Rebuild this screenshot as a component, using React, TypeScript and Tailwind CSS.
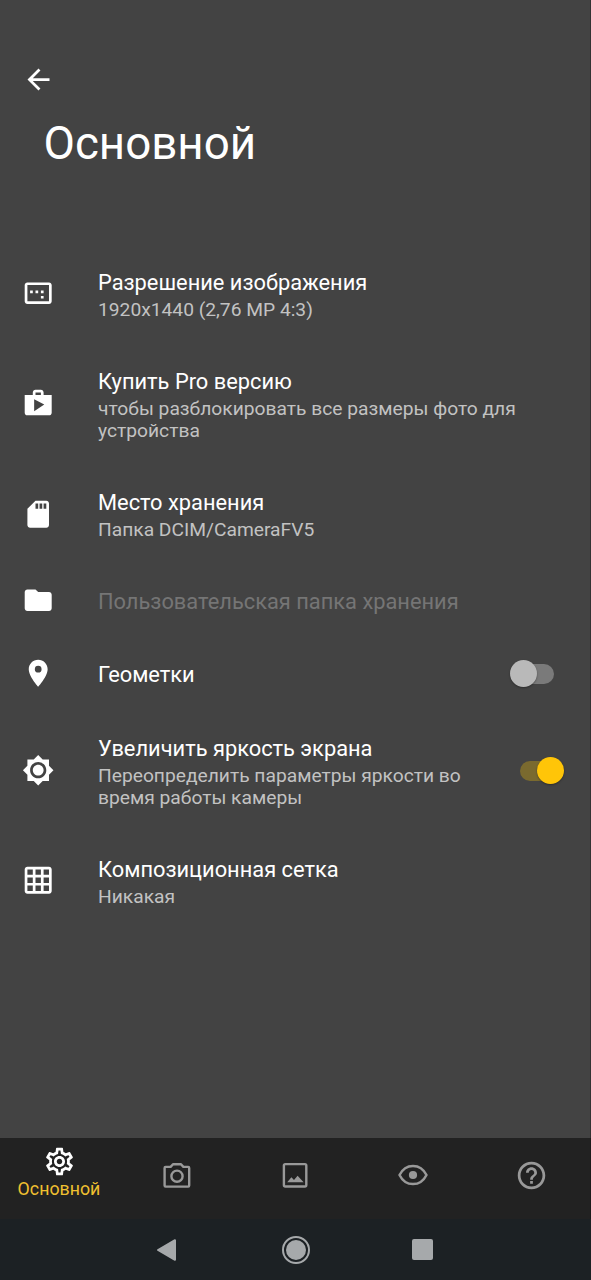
import React from "react";
import {
  MdArrowBack,
  MdImageAspectRatio,
  MdShop,
  MdSdStorage,
  MdFolder,
  MdPlace,
  MdBrightness7,
  MdGridOn,
  MdOutlineSettings,
  MdHelpOutline,
} from "react-icons/md";

type RowProps = {
  icon: React.ReactNode;
  title: string;
  titleClass?: string;
  lines?: string[];
  className: string;
  children?: React.ReactNode;
};

function Row({ icon, title, titleClass = "text-white", lines = [], className, children }: RowProps) {
  return (
    <div className={`flex items-center pl-[22px] ${className}`}>
      <div className="mb-[3px] w-[76px] shrink-0 text-[32.4px] text-white">{icon}</div>
      <div className="flex grow flex-col whitespace-nowrap">
        <div className={`text-[21.84px] leading-[26px] ${titleClass}`}>{title}</div>
        {lines.length > 0 && (
          <div className="-mb-px pt-[3px] text-[19.23px] leading-[22.3px] text-[#c2c2c2]">
            {lines.map((l) => (
              <div key={l}>{l}</div>
            ))}
          </div>
        )}
      </div>
      {children}
    </div>
  );
}

function CameraIcon() {
  return (
    <svg viewBox="0 0 28 28" className="size-[28px]" fill="none" stroke="currentColor" strokeWidth="2.4">
      <path d="M2.600 5.900H7.600L10 3.200H18L20.400 5.900H25.200Q26.200 5.900 26.200 6.900V24.600Q26.200 25.600 25.200 25.600H2.600Q1.600 25.600 1.600 24.600V6.900Q1.600 5.900 2.600 5.900z" strokeLinejoin="round" />
      <circle cx="14" cy="15.200" r="5.600" />
    </svg>
  );
}

function PhotoIcon() {
  return (
    <svg viewBox="0 0 28 28" className="size-[28px]" fill="none">
      <rect x="2.9" y="3.1" width="22.4" height="22.4" rx="1.4" stroke="currentColor" strokeWidth="2.4" />
      <path d="M6.200 21.300 10.400 16.300 13 18.900 16.600 14.700 22.600 21.300z" fill="currentColor" />
    </svg>
  );
}

function EyeIcon() {
  return (
    <svg viewBox="0 0 32 24" className="h-6 w-8" fill="none">
      <path d="M2.500 12C5.500 6 10.200 2.900 16 2.900s10.500 3.100 13.500 9.100C26.500 18 21.800 21.100 16 21.100S5.500 18 2.500 12z" stroke="currentColor" strokeWidth="2.500" strokeLinejoin="round" />
      <circle cx="16" cy="12" r="4.100" fill="currentColor" />
    </svg>
  );
}

export default function App() {
  return (
    <div className="flex h-[1280px] w-[591px] flex-col overflow-hidden bg-[#434343] font-['Roboto','Noto_Sans',sans-serif]">
      <div className="flex grow flex-col border-r border-[#333333]">
        <header className="h-[246px] shrink-0 pt-[63px]">
          <button className="ml-[21.5px] block text-[33px] text-white">
            <MdArrowBack />
          </button>
          <h1 className="ml-[43.5px] mt-[21px] text-[45.7px] leading-[54px] whitespace-nowrap text-white">Основной</h1>
        </header>
        <main className="flex flex-col">
          <Row className="h-[98px]" icon={<MdImageAspectRatio />} title="Разрешение изображения" lines={["1920x1440 (2,76 MP 4:3)"]} />
          <Row
            className="h-[122px]"
            icon={<MdShop />}
            title="Купить Pro версию"
            lines={["чтобы разблокировать все размеры фото для", "устройства"]}
          />
          <Row className="h-[99px]" icon={<MdSdStorage />} title="Место хранения" lines={["Папка DCIM/CameraFV5"]} />
          <Row className="h-[73px]" icon={<MdFolder />} title="Пользовательская папка хранения" titleClass="text-[#757575]" />
          <Row className="h-[73px]" icon={<MdPlace />} title="Геометки">
            <div className="mr-[36px] mb-[2px] flex h-5 w-[41px] items-center rounded-full bg-[#7a7a7a]">
              <div className="-ml-[3px] size-[27px] shrink-0 rounded-full bg-[#b9b9b9] shadow-[0_1px_2px_rgba(0,0,0,0.35)]" />
            </div>
          </Row>
          <Row
            className="h-[122px]"
            icon={<MdBrightness7 />}
            title="Увеличить яркость экрана"
            lines={["Переопределить параметры яркости во", "время работы камеры"]}
          >
            <div className="mr-[29px] mb-[3px] flex h-5 w-[41px] items-center justify-end rounded-full bg-[#7a6a2f]">
              <div className="-mr-[3px] size-[27px] shrink-0 rounded-full bg-[#ffc508] shadow-[0_1px_2px_rgba(0,0,0,0.35)]" />
            </div>
          </Row>
          <Row className="h-[98px]" icon={<MdGridOn />} title="Композиционная сетка" lines={["Никакая"]} />
        </main>
      </div>
      <nav className="grid h-[81px] shrink-0 grid-cols-5 border-r border-[#1b1b1b] bg-[#222222] text-[#999999]">
        <div className="flex flex-col items-center pt-[7px]">
          <MdOutlineSettings className="size-[33px] text-white" />
          <span className="text-[17.8px] leading-[22px] whitespace-nowrap text-[#f0c030]">Основной</span>
        </div>
        <div className="flex items-center justify-center pb-[7px]">
          <CameraIcon />
        </div>
        <div className="flex items-center justify-center pb-[7px]">
          <PhotoIcon />
        </div>
        <div className="flex items-center justify-center pb-[7px]">
          <EyeIcon />
        </div>
        <div className="flex items-center justify-center pb-[6px]">
          <MdHelpOutline className="size-[33px]" />
        </div>
      </nav>
      <div className="flex h-[61px] shrink-0 items-center bg-[#1c2124] pl-[156px] text-[#a6a9ab]">
        <svg viewBox="0 0 22 24" className="h-6 w-[22px]">
          <path d="M2 12 19 2.200V21.800z" fill="currentColor" stroke="currentColor" strokeWidth="2" strokeLinejoin="round" />
        </svg>
        <svg viewBox="0 0 30 30" className="ml-[102.6px] size-[30px]">
          <circle cx="15" cy="15" r="13" fill="none" stroke="currentColor" strokeWidth="2" />
          <circle cx="15" cy="15" r="10" fill="currentColor" />
        </svg>
        <div className="ml-[101.4px] size-[21px] rounded-[2px] bg-[#a6a9ab]" />
      </div>
    </div>
  );
}
